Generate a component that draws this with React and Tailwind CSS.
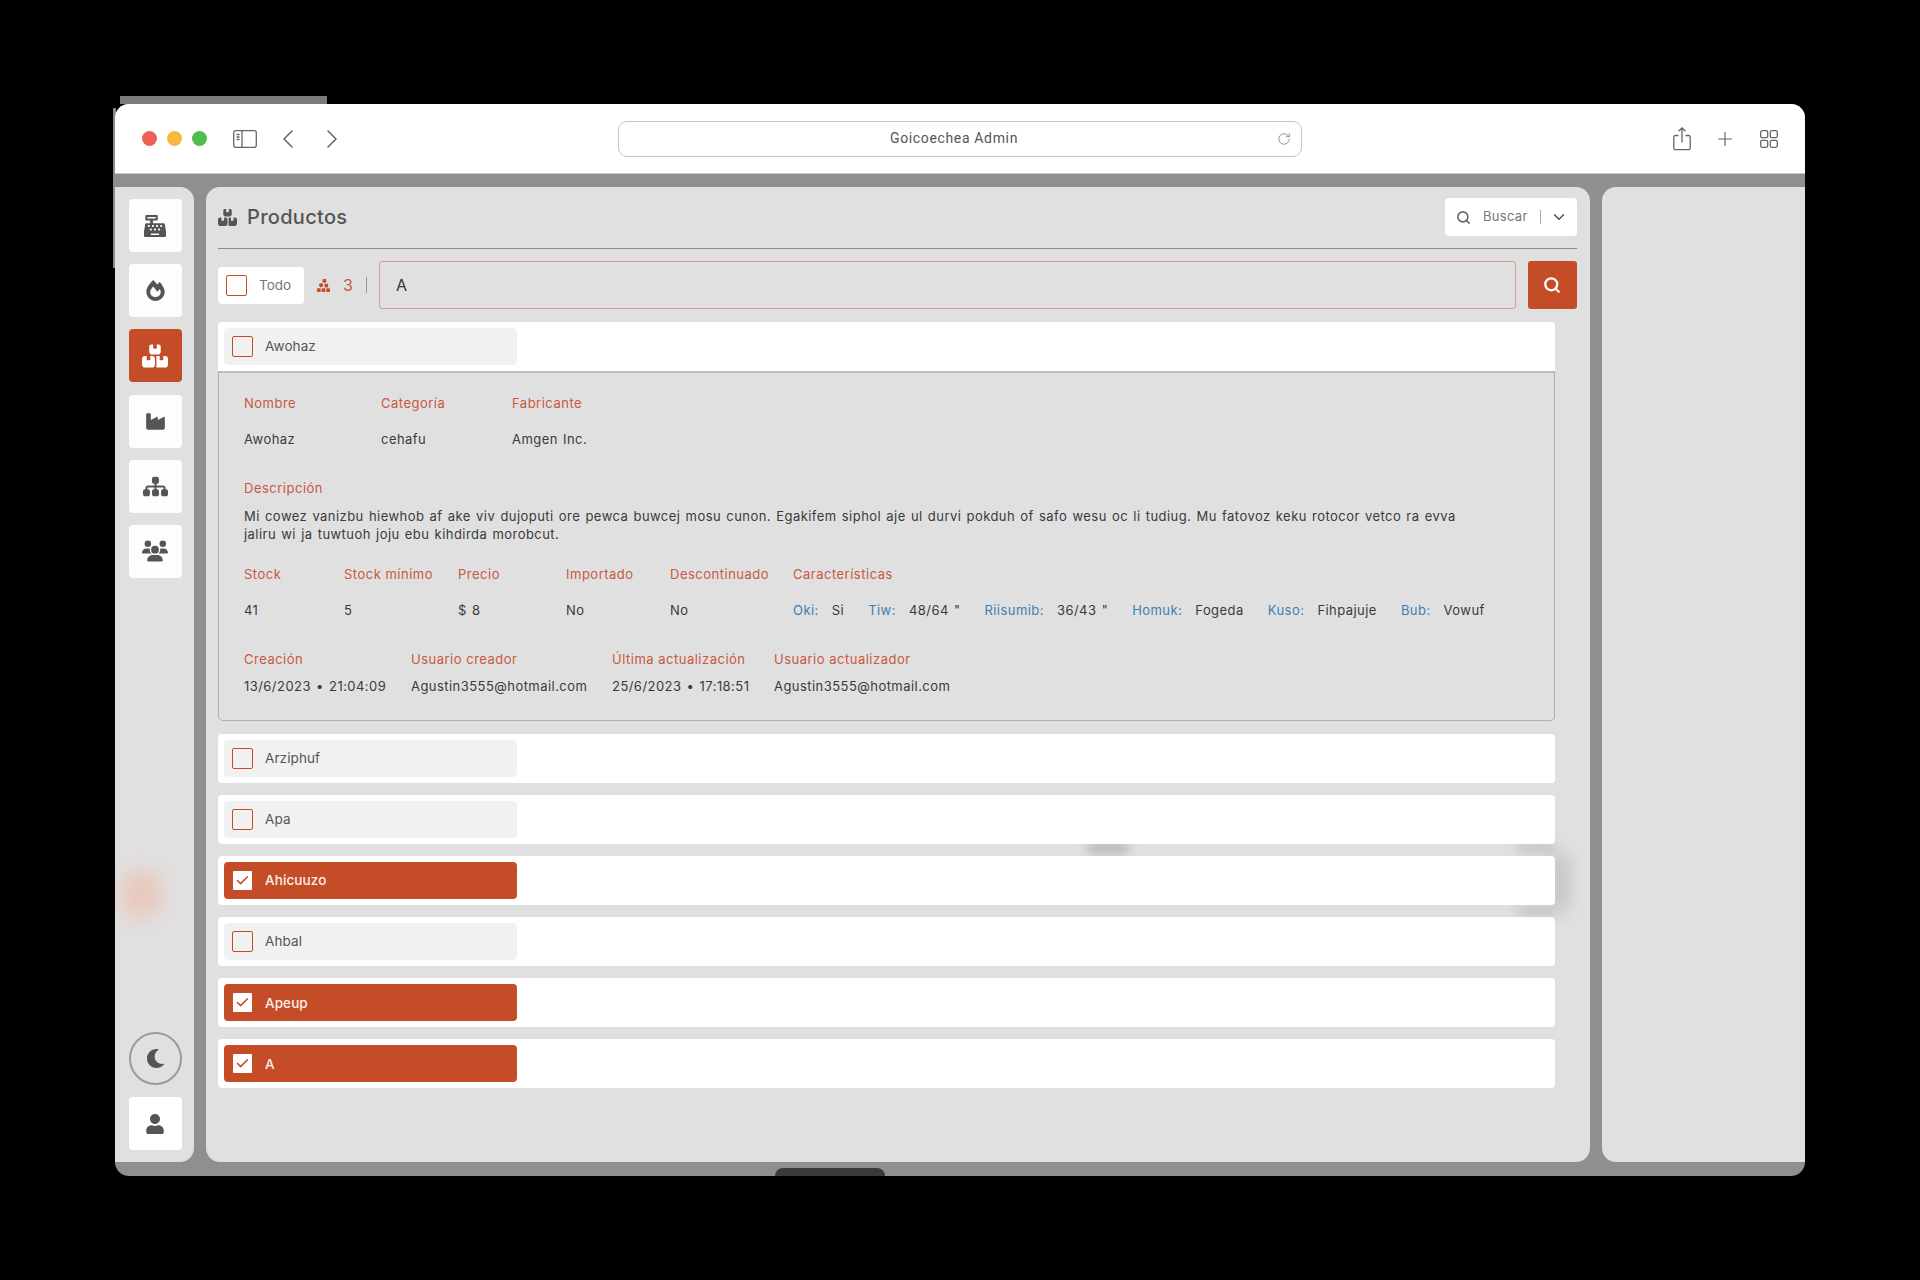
import React from "react";
import { FaCashRegister, FaFireAlt, FaMoon, FaUser } from "react-icons/fa";
import { FaCubesStacked, FaBoxesStacked, FaIndustry, FaSitemap, FaUsers } from "react-icons/fa6";
import { ChevronLeft, ChevronRight, ChevronDown, Plus, RotateCw, Check, Search } from "lucide-react";

const navTop = [
  { I: FaCashRegister, s: 22 },
  { I: FaFireAlt, s: 21 },
  { I: FaBoxesStacked, s: 26, active: true },
  { I: FaIndustry, s: 21 },
  { I: FaSitemap, s: 25 },
  { I: FaUsers, s: 26 },
];

const rows = [
  { n: "Arziphuf" },
  { n: "Apa" },
  { n: "Ahicuuzo", c: true },
  { n: "Ahbal" },
  { n: "Apeup", c: true },
  { n: "A", c: true },
];

const feats = [
  ["Oki:", "Si"],
  ["Tiw:", '48/64 "'],
  ["Riisumib:", '36/43 "'],
  ["Homuk:", "Fogeda"],
  ["Kuso:", "Fihpajuje"],
  ["Bub:", "Vowuf"],
];

function Box({ checked, white }) {
  return (
    <span className={`flex h-[21px] w-[21px] shrink-0 items-center justify-center rounded-[2px] border border-[#c44d27] ${checked || white ? "bg-white" : ""}`}>
      {checked && <Check size={15} strokeWidth={2.5} className="text-[#c44d27]" />}
    </span>
  );
}

function Inner({ n, c }) {
  return (
    <div className={`flex h-[37px] w-[293px] items-center gap-3 rounded-[4px] pl-2 text-[13.5px] tracking-[0.1px] ${c ? "bg-[#c44d27] font-medium text-[#fdf0ea]" : "bg-[#f1f1f1] text-[#555]"}`}>
      <Box checked={c} />
      <span>{n}</span>
    </div>
  );
}

const L = ({ children }) => <div className="text-[13px] leading-[18px] tracking-[0.5px] text-[#c9583f]">{children}</div>;
const V = ({ children }) => <div className="text-[13px] leading-[18px] tracking-[0.45px] text-[#3a3a3a] [word-spacing:1.1px]">{children}</div>;

function Field({ w, label, value, gap = "gap-[18px]" }) {
  return (
    <div className={`flex flex-col ${gap}`} style={{ width: w }}>
      <L>{label}</L>
      <V>{value}</V>
    </div>
  );
}

export default function App() {
  return (
    <div className="min-h-[1280px] w-full bg-black pl-[115px] pt-[104px]" style={{ fontFamily: "Inter, 'Liberation Sans', sans-serif" }}>
      <div className="relative h-[1072px] w-[1690px]">
        {/* screen-capture leftovers around the window */}
        <div className="absolute left-[5px] top-[-8px] h-[8px] w-[207px] bg-[#7b7b7b]" />
        <div className="absolute left-[-2px] top-[4px] h-[160px] w-[3px] bg-[#8a8a8a]" />

        <div className="relative flex h-full flex-col overflow-hidden rounded-[14px] bg-[#8f8f8f]">
          {/* browser toolbar */}
          <header className="flex h-[70px] shrink-0 items-center border-b border-[#c8c8c8] bg-white pl-[27px] pr-[27px] text-[#666]">
            <div className="flex gap-[10px]">
              <span className="h-[15px] w-[15px] rounded-full bg-[#ee5f57]" />
              <span className="h-[15px] w-[15px] rounded-full bg-[#f5b93f]" />
              <span className="h-[15px] w-[15px] rounded-full bg-[#51bd4b]" />
            </div>
            <svg className="ml-[26px]" width="24" height="18" viewBox="0 0 24 18" fill="none" stroke="#666" strokeWidth="1.3">
              <rect x="0.7" y="0.7" width="22.6" height="16.6" rx="2" />
              <path d="M9 1v16M3.5 4.5h3M3.5 7h3M3.5 9.5h3" />
            </svg>
            <ChevronLeft size={32} strokeWidth={1.2} className="ml-[15px]" />
            <ChevronRight size={32} strokeWidth={1.2} className="ml-[12px]" />
            <div className="relative ml-[270px] flex h-[36px] w-[684px] items-center justify-center rounded-[9px] border border-[#c6c6c6] pr-[12px]">
              <span className="text-[14px] tracking-[0.65px] text-[#555]" style={{ fontFamily: "Roboto, sans-serif" }}>Goicoechea Admin</span>
              <RotateCw size={14} strokeWidth={1.3} className="absolute right-[10px] top-[10px] text-[#777]" />
            </div>
            <div className="ml-auto flex items-center">
              <svg width="18" height="24" viewBox="0 0 18 24" fill="none" stroke="#666" strokeWidth="1.3">
                <path d="M5.5 8.5H2.2a1.4 1.4 0 0 0-1.4 1.4v11.4a1.4 1.4 0 0 0 1.4 1.4h13.6a1.4 1.4 0 0 0 1.4-1.4V9.9a1.4 1.4 0 0 0-1.4-1.4h-3.3M9 15.5V1M5.5 4.3 9 1l3.5 3.3" />
              </svg>
              <Plus size={22} strokeWidth={1.3} className="ml-[23px]" />
              <svg className="ml-[24px]" width="18" height="18" viewBox="0 0 18 18" fill="none" stroke="#666" strokeWidth="1.3">
                <rect x="0.7" y="0.7" width="7" height="7" rx="1.5" />
                <rect x="10.3" y="0.7" width="7" height="7" rx="1.5" />
                <rect x="0.7" y="10.3" width="7" height="7" rx="1.5" />
                <rect x="10.3" y="10.3" width="7" height="7" rx="1.5" />
              </svg>
            </div>
          </header>

          {/* page */}
          <div className="flex min-h-0 flex-1 gap-[12px] pb-[14px] pt-[13px]">
            <aside className="flex w-[79px] shrink-0 flex-col justify-between rounded-r-[14px] bg-[#e0e0e0] pb-[12px] pl-[13.5px] pt-[12px]">
              <div className="flex flex-col gap-[12.2px]">
                {navTop.map(({ I, s, active }, i) => (
                  <button key={i} className={`flex h-[53px] w-[53px] items-center justify-center rounded-[4px] ${active ? "bg-[#c44d27] text-white" : "bg-[#fdfdfd] text-[#555]"}`}>
                    <I size={s} />
                  </button>
                ))}
              </div>
              <div className="flex flex-col gap-[12px]">
                <button className="flex h-[53px] w-[53px] items-center justify-center rounded-full border-2 border-[#9a9a9a] text-[#555]">
                  <FaMoon size={19} />
                </button>
                <button className="flex h-[53px] w-[53px] items-center justify-center rounded-[4px] bg-white text-[#555]">
                  <FaUser size={20} />
                </button>
              </div>
            </aside>

            <main className="relative w-[1384px] shrink-0 rounded-[14px] bg-[#e0e0e0] pl-[12px] pr-[13px] pt-[11px]">
              <div className="flex h-[38px] items-center justify-between">
                <h1 className="flex items-center gap-[10px] text-[20px] font-medium tracking-[0.3px] text-[#555]">
                  <FaBoxesStacked size={19} />
                  Productos
                </h1>
                <div className="flex h-[38px] w-[132px] items-center rounded-[4px] bg-white pl-[11px] text-[13px] text-[#777]">
                  <Search size={15} strokeWidth={2.5} className="text-[#666]" />
                  <span className="ml-[12px] tracking-[0.3px]">Buscar</span>
                  <span className="ml-[12px] h-[14px] w-px bg-[#aaa]" />
                  <ChevronDown size={18} strokeWidth={2} className="ml-[9px] text-[#555]" />
                </div>
              </div>
              <div className="mt-[12px] h-px bg-[#8d8d8d]" />

              <div className="mt-[12px] flex h-[48px] items-center">
                <div className="flex h-[37px] w-[86px] items-center gap-[12px] rounded-[4px] bg-white pl-[8px] text-[13.5px] text-[#777]">
                  <Box white />
                  <span>Todo</span>
                </div>
                <FaCubesStacked size={15} className="ml-[12px] text-[#c44d27]" />
                <span className="ml-[12px] text-[16px] text-[#c9583f]">3</span>
                <span className="ml-[13px] h-[16px] w-px bg-[#999]" />
                <div className="ml-[12px] flex h-[48px] w-[1137px] shrink-0 items-center rounded-[3px] border border-[#dc9a8c] pl-[16px] text-[16px] text-[#333]">A</div>
                <button className="ml-[12px] flex h-[48px] w-[49px] shrink-0 items-center justify-center rounded-[3px] bg-[#c44d27] text-white">
                  <Search size={18} strokeWidth={3} />
                </button>
              </div>

              {/* blurred smudges behind the list */}
              <div className="pointer-events-none absolute left-[880px] top-[655px] h-[12px] w-[44px] rounded-full bg-[#bbb] blur-[5px]" />
              <div className="pointer-events-none absolute left-[1310px] top-[655px] h-[12px] w-[40px] rounded-full bg-[#c8c8c8] blur-[5px]" />
              <div className="pointer-events-none absolute left-[1310px] top-[718px] h-[12px] w-[40px] rounded-full bg-[#c4c4c4] blur-[6px]" />
              <div className="pointer-events-none absolute left-[1343px] top-[665px] h-[60px] w-[20px] rounded-full bg-[#c4c4c4] blur-[8px]" />

              <div className="relative mt-[13px] w-[1337px]">
                <div className="flex h-[49px] items-center rounded-t-[4px] bg-white pl-[6px]">
                  <Inner n="Awohaz" />
                </div>
                <section className="h-[350px] rounded-b-[5px] border border-t-2 border-[#b0b0b0] border-t-[#bdbdbd] pl-[25px] pt-[21px]">
                  <div className="flex">
                    <Field w={137} label="Nombre" value="Awohaz" />
                    <Field w={131} label="Categoría" value="cehafu" />
                    <Field w={200} label="Fabricante" value="Amgen Inc." />
                  </div>
                  <div className="mt-[31px]">
                    <L>Descripción</L>
                    <p className="mt-[10px] whitespace-nowrap text-[13px] leading-[18px] tracking-[0.45px] text-[#3a3a3a] [word-spacing:1.1px]">
                      Mi cowez vanizbu hiewhob af ake viv dujoputi ore pewca buwcej mosu cunon. Egakifem siphol aje ul durvi pokduh of safo wesu oc li tudiug. Mu fatovoz keku rotocor vetco ra evva
                      <br />
                      jaliru wi ja tuwtuoh joju ebu kihdirda morobcut.
                    </p>
                  </div>
                  <div className="mt-[22px] flex">
                    <Field w={100} label="Stock" value="41" />
                    <Field w={114} label="Stock mínimo" value="5" />
                    <Field w={108} label="Precio" value="$ 8" />
                    <Field w={104} label="Importado" value="No" />
                    <Field w={123} label="Descontinuado" value="No" />
                    <div className="flex flex-col gap-[18px]">
                      <L>Características</L>
                      <div className="flex gap-[24px] whitespace-nowrap text-[13px] leading-[18px] tracking-[0.45px] [word-spacing:1.1px]">
                        {feats.map(([k, v]) => (
                          <span key={k} className="flex gap-[13px]">
                            <span className="text-[#3f7fb0]">{k}</span>
                            <span className="text-[#3a3a3a]">{v}</span>
                          </span>
                        ))}
                      </div>
                    </div>
                  </div>
                  <div className="mt-[31px] flex">
                    <Field w={167} label="Creación" value="13/6/2023 • 21:04:09" gap="gap-[9px]" />
                    <Field w={201} label="Usuario creador" value="Agustin3555@hotmail.com" gap="gap-[9px]" />
                    <Field w={162} label="Última actualización" value="25/6/2023 • 17:18:51" gap="gap-[9px]" />
                    <Field w={250} label="Usuario actualizador" value="Agustin3555@hotmail.com" gap="gap-[9px]" />
                  </div>
                </section>
                <div className="mt-[12.5px] flex flex-col gap-[12.2px]">
                  {rows.map((r) => (
                    <div key={r.n} className="flex h-[49px] items-center rounded-[4px] bg-white pl-[6px]">
                      <Inner n={r.n} c={r.c} />
                    </div>
                  ))}
                </div>
              </div>
            </main>

            <aside className="flex-1 rounded-l-[14px] bg-[#e0e0e0]" />
          </div>
          <div className="pointer-events-none absolute left-[5px] top-[765px] h-[50px] w-[42px] rounded-full bg-[#f0b9a4] opacity-60 blur-[10px]" />
        </div>
        <div className="absolute bottom-0 left-[660px] h-[8px] w-[110px] rounded-t-[8px] bg-[#3a3a3a]" />
      </div>
    </div>
  );
}
